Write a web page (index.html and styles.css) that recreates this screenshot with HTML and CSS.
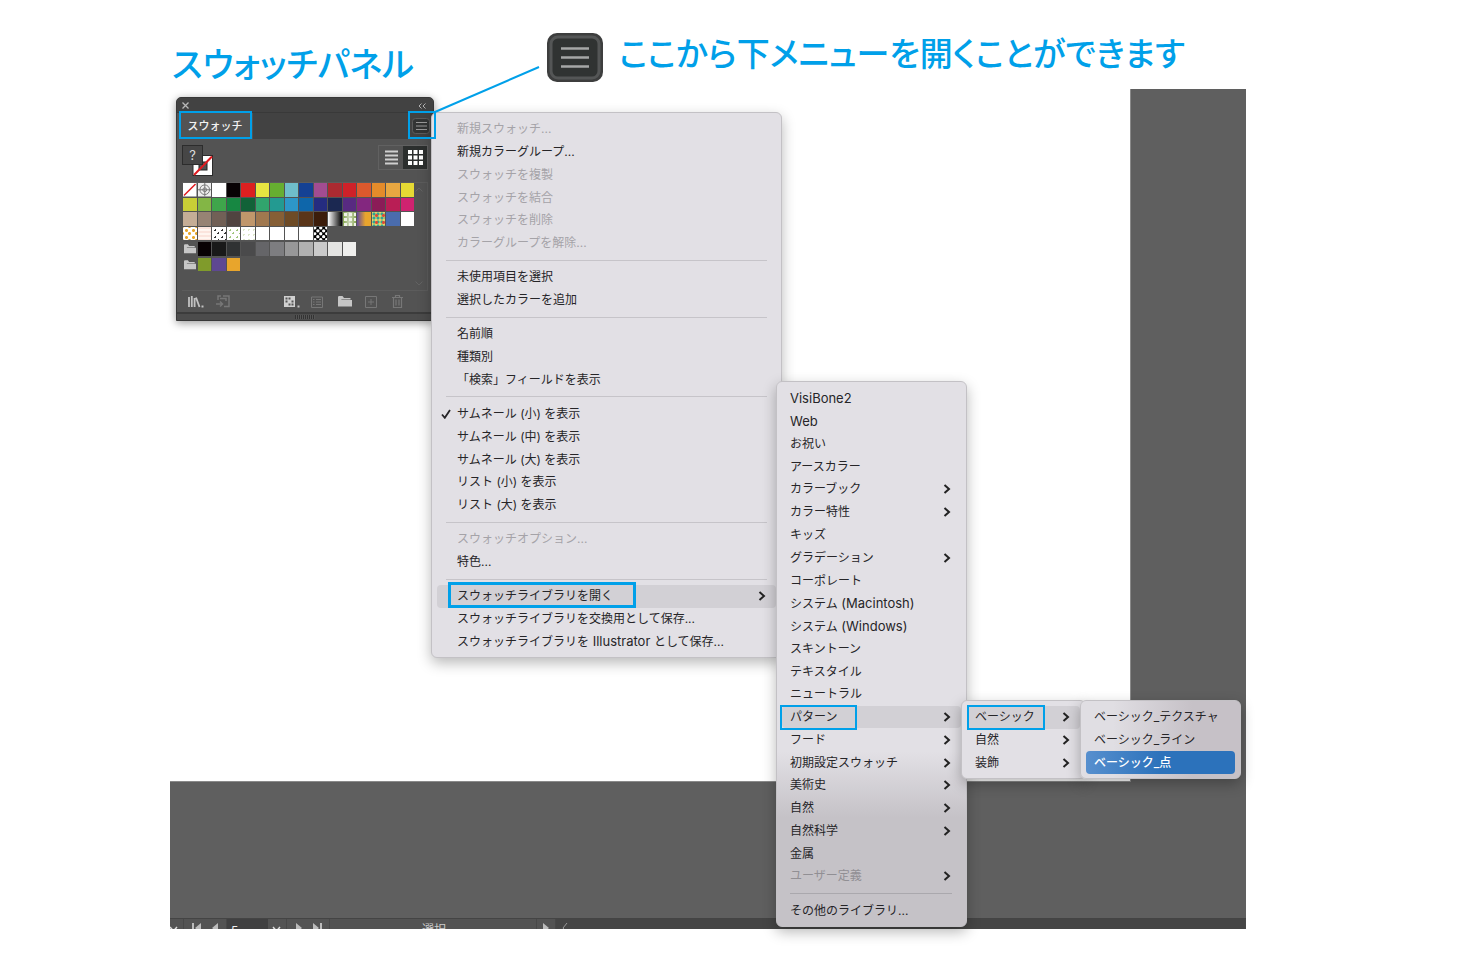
FILE: index.html
```html
<!DOCTYPE html>
<html lang="ja">
<head>
<meta charset="utf-8">
<title>スウォッチパネル</title>
<link rel="stylesheet" href="styles.css">
</head>
<body>
<svg class="defs" width="0" height="0" aria-hidden="true">
  <symbol id="chev" viewBox="0 0 8 12"><path d="M1.500 2 6 6 1.500 10" fill="none" stroke="currentColor" stroke-width="2"/></symbol>
  <symbol id="folder" viewBox="0 0 14 11"><path d="M0 10.500V1.200Q0 0 1.200 0H4.500L6 2H12.500V3.500H3.500L2 7V4H14V10.500Z" fill="currentColor"/></symbol>
</svg>

<header class="notes">
  <h1 class="note note-panel">スウォッチパネル</h1>
  <svg class="menu-icon" viewBox="0 0 56 49" aria-hidden="true">
    <rect width="56" height="49" rx="10" fill="#3d3e3e"/>
    <rect x="4" y="4" width="48" height="41" rx="7" fill="#303332" stroke="#545656" stroke-width="3"/>
    <path d="M14 15.500H42M14 24.500H42M14 33.500H42" stroke="#a5a7a6" stroke-width="2.400"/>
  </svg>
  <p class="note note-menu">ここから下メニューを開くことができます</p>
</header>

<main class="workspace">
  <div class="artboard"></div>
  <footer class="status">
    <div class="cell first"><svg width="9" height="7" viewBox="0 0 9 7"><path d="M0 1 3.500 5 7 1" fill="none" stroke="#ddd" stroke-width="1.500"/></svg></div>
    <div class="cell nav">
      <svg width="9" height="10" viewBox="0 0 9 10"><path d="M0 0H2V10H0ZM9 0V10L3 5Z" fill="#bbb"/></svg>
      <svg width="6" height="10" viewBox="0 0 6 10"><path d="M6 0V10L0 5Z" fill="#bbb"/></svg>
    </div>
    <input class="page-no" value="5" aria-label="アートボード">
    <div class="cell drop"><svg width="9" height="7" viewBox="0 0 9 7"><path d="M1 1 4.500 5 8 1" fill="none" stroke="#ddd" stroke-width="1.500"/></svg></div>
    <div class="cell nav">
      <svg width="6" height="10" viewBox="0 0 6 10"><path d="M0 0V10L6 5Z" fill="#bbb"/></svg>
      <svg width="9" height="10" viewBox="0 0 9 10"><path d="M9 0H7V10H9ZM0 0V10L6 5Z" fill="#bbb"/></svg>
    </div>
    <div class="cell tool">選択</div>
    <div class="cell play"><svg width="6" height="10" viewBox="0 0 6 10"><path d="M0 0V10L6 5Z" fill="#bbb"/></svg></div>
    <div class="cell track"><svg width="6" height="10" viewBox="0 0 6 10"><path d="M5 0 1 5 5 10" fill="none" stroke="#999"/></svg></div>
  </footer>

  <section class="panel">
    <div class="panel-top">
      <svg width="7" height="7" viewBox="0 0 7 7"><path d="M.5.5 6.500 6.500M6.500.5.5 6.500" stroke="#b8b8b8" stroke-width="1.300"/></svg>
      <svg width="8" height="6" viewBox="0 0 8 6"><path d="M3.500.5 1 3 3.500 5.500M7.500.5 5 3 7.500 5.500" fill="none" stroke="#b0b0b0"/></svg>
    </div>
    <div class="tabs">
      <button class="tab">スウォッチ</button>
      <button class="panel-menu" aria-label="パネルメニュー"><svg width="18" height="16" viewBox="0 0 18 16"><rect x=".5" y=".5" width="17" height="15" rx="3" fill="#333535" stroke="#5c5c5c"/><path d="M4 4.500H15M4 8H15M4 11.500H15" stroke="#999"/></svg></button>
    </div>
    <div class="tools">
      <svg width="32" height="32" viewBox="0 0 32 32" aria-hidden="true">
        <rect x="11" y="10.500" width="19.500" height="20" fill="#fff" stroke="#2c2c2c"/>
        <rect x="17" y="17" width="8" height="8" fill="#535353" stroke="#222"/>
        <path d="M12 30 30 11.500" stroke="#e01b20" stroke-width="2"/>
        <rect x=".5" y=".5" width="20" height="19" fill="#464646" stroke="#2c2c2c"/>
        <text x="10.500" y="15" class="q" text-anchor="middle">?</text>
      </svg>
      <div class="views">
        <button aria-label="リスト表示"><svg width="13" height="15" viewBox="0 0 13 15"><path d="M0 1.500H13M0 5.500H13M0 9.500H13M0 13.500H13" stroke="#cfcfcf" stroke-width="2"/></svg></button>
        <button class="on" aria-label="サムネール表示"><svg width="15" height="15" viewBox="0 0 15 15"><path d="M0 0H4V4H0ZM5.500 0H9.500V4H5.500ZM11 0H15V4H11ZM0 5.500H4V9.500H0ZM5.500 5.500H9.500V9.500H5.500ZM11 5.500H15V9.500H11ZM0 11H4V15H0ZM5.500 11H9.500V15H5.500ZM11 11H15V15H11Z" fill="#fff"/></svg></button>
      </div>
    </div>
    <div class="well">
      <div class="grid" id="main-swatches"></div>
      <div class="grid group" id="grays"><svg class="folder"><use href="#folder"/></svg></div>
      <div class="grid group" id="brights"><svg class="folder"><use href="#folder"/></svg></div>
      <div class="scroll">
        <svg width="8" height="5" viewBox="0 0 8 5"><path d="M.5 4.500 4 1 7.500 4.500" fill="none" stroke="#636363"/></svg>
        <svg width="8" height="5" viewBox="0 0 8 5"><path d="M.5.5 4 4 7.500.5" fill="none" stroke="#636363"/></svg>
      </div>
    </div>
    <div class="actions">
      <button aria-label="スウォッチライブラリメニュー"><svg width="16" height="12" viewBox="0 0 16 12"><path d="M1 1V11M3.800 0V11M6.600 2V11M8 1.500 11.500 11" fill="none" stroke="#c2c2c2" stroke-width="1.800"/><path d="M13.500 9.500H15.500V11.500H13.500Z" fill="#c2c2c2"/></svg></button>
      <button disabled aria-label="ライブラリに追加"><svg width="14" height="13" viewBox="0 0 14 13"><path d="M2 5V1H5M7 1H13V11.500H8M4 3.500H10V6M0 9H6M4 6.500 6.500 9 4 11.500" fill="none" stroke="#777" stroke-width="1.500"/></svg></button>
      <button aria-label="スウォッチの種類"><svg width="16" height="12" viewBox="0 0 16 12"><path d="M0 0H11V11H0Z" fill="#d0d0d0"/><path d="M1.500 2.500H3.500M4.500 2.500H6.500M1.500 5.500H3.500M7.500 5.500H9.500M4.500 8.500H6.500M7.500 8.500H9.500" stroke="#555" stroke-width="2"/><path d="M13.500 9.500H15.500V11.500H13.500Z" fill="#c2c2c2"/></svg></button>
      <button disabled aria-label="オプション"><svg width="12" height="12" viewBox="0 0 12 12"><path d="M.5 1H11.500V11.500H.5ZM2 3.500H3.500M5 3.500H10M2 6H3.500M5 6H10M2 8.500H3.500M5 8.500H10" fill="none" stroke="#777"/></svg></button>
      <button aria-label="新規カラーグループ"><svg width="14" height="11"><use href="#folder"/></svg></button>
      <button disabled aria-label="新規スウォッチ"><svg width="12" height="12" viewBox="0 0 12 12"><path d="M.5.5H11.500V11.500H.5ZM6 3V9M3 6H9" fill="none" stroke="#777"/></svg></button>
      <button disabled aria-label="削除"><svg width="11" height="13" viewBox="0 0 11 13"><path d="M0 2.500H11M3.500 2V.5H7.500V2M1.500 2.500V12.500H9.500V2.500M4 4.500V10.500M7 4.500V10.500" fill="none" stroke="#777" stroke-width="1.200"/></svg></button>
    </div>
    <div class="grip"></div>
  </section>

  <div class="menu menu-panel" role="menu">
    <button disabled>新規スウォッチ...</button>
    <button>新規カラーグループ...</button>
    <button disabled>スウォッチを複製</button>
    <button disabled>スウォッチを結合</button>
    <button disabled>スウォッチを削除</button>
    <button disabled>カラーグループを解除...</button>
    <hr>
    <button>未使用項目を選択</button>
    <button>選択したカラーを追加</button>
    <hr>
    <button>名前順</button>
    <button>種類別</button>
    <button>「検索」フィールドを表示</button>
    <hr>
    <button><svg class="check" viewBox="0 0 10 10"><path d="M1 5.500 3.800 8.800 9 1" fill="none" stroke="currentColor" stroke-width="1.800"/></svg>サムネール (小) を表示</button>
    <button>サムネール (中) を表示</button>
    <button>サムネール (大) を表示</button>
    <button>リスト (小) を表示</button>
    <button>リスト (大) を表示</button>
    <hr>
    <button disabled>スウォッチオプション...</button>
    <button>特色...</button>
    <hr>
    <button class="open">スウォッチライブラリを開く<svg class="chev"><use href="#chev"/></svg></button>
    <button>スウォッチライブラリを交換用として保存...</button>
    <button><span>スウォッチライブラリを<span class="latin"> Illustrator </span>として保存...</span></button>
  </div>

  <div class="menu menu-library" role="menu">
    <button><span class="latin">VisiBone2</span></button>
    <button><span class="latin">Web</span></button>
    <button>お祝い</button>
    <button>アースカラー</button>
    <button>カラーブック<svg class="chev"><use href="#chev"/></svg></button>
    <button>カラー特性<svg class="chev"><use href="#chev"/></svg></button>
    <button>キッズ</button>
    <button>グラデーション<svg class="chev"><use href="#chev"/></svg></button>
    <button>コーポレート</button>
    <button><span>システム<span class="latin"> (Macintosh)</span></span></button>
    <button><span>システム<span class="latin"> (Windows)</span></span></button>
    <button>スキントーン</button>
    <button>テキスタイル</button>
    <button>ニュートラル</button>
    <button class="open">パターン<svg class="chev"><use href="#chev"/></svg></button>
    <button>フード<svg class="chev"><use href="#chev"/></svg></button>
    <button>初期設定スウォッチ<svg class="chev"><use href="#chev"/></svg></button>
    <button>美術史<svg class="chev"><use href="#chev"/></svg></button>
    <button>自然<svg class="chev"><use href="#chev"/></svg></button>
    <button>自然科学<svg class="chev"><use href="#chev"/></svg></button>
    <button>金属</button>
    <button disabled>ユーザー定義<svg class="chev"><use href="#chev"/></svg></button>
    <hr>
    <button>その他のライブラリ...</button>
  </div>

  <div class="menu menu-pattern" role="menu">
    <button class="open">ベーシック<svg class="chev"><use href="#chev"/></svg></button>
    <button>自然<svg class="chev"><use href="#chev"/></svg></button>
    <button>装飾<svg class="chev"><use href="#chev"/></svg></button>
  </div>

  <div class="menu menu-basic" role="menu">
    <button>ベーシック_テクスチャ</button>
    <button>ベーシック_ライン</button>
    <button class="chosen">ベーシック_点</button>
  </div>

  <span class="mark mark-tab"></span>
  <span class="mark mark-button"></span>
  <span class="mark mark-open"></span>
  <span class="mark mark-pattern"></span>
  <span class="mark mark-basic"></span>
  <svg class="leader" viewBox="0 0 106 47"><path d="M1 46 105 1" stroke="#00a0e9" stroke-width="2"/></svg>
</main>
<script src="swatches.js"></script>
</body>
</html>
```
FILE: styles.css
```css
* { box-sizing: border-box; }
body {
  margin: 0;
  min-height: 100vh;
  background: #fff;
  font-family: Inter, "Noto Sans CJK JP", sans-serif;
  font-size: 12px;
  color: #262528;
}
button { border: 0; padding: 0; background: none; font: inherit; color: inherit; }
svg { display: block; flex: none; }
.defs { position: absolute; }
.latin { font-size: 13px; }

.notes { display: flex; height: 89px; padding-left: 172px; align-items: flex-start; }
.note {
  margin: 0;
  font-family: "Noto Sans CJK JP", sans-serif;
  font-weight: 500;
  font-feature-settings: "palt";
  line-height: 40px;
  color: #00a0e9;
  white-space: nowrap;
}
.note-panel { width: 375px; padding-top: 43px; font-size: 34px; }
.menu-icon { width: 56px; height: 49px; margin-top: 33px; }
.note-menu { padding: 32px 0 0 16px; font-size: 33px; }

.workspace {
  position: relative;
  display: grid;
  grid-template: 693px 136px 11px / 1fr 115px;
  margin: 0 214px 0 170px;
  background: #5f5f5f;
}
.artboard { background: #fff; border: solid #8a8a8a; border-width: 0 1px 1px 0; }

.status {
  grid-area: 3 / 1 / 4 / 3;
  display: flex;
  align-items: flex-start;
  overflow: hidden;
  background: #4b4b4b;
  border-top: 1px solid #444;
}
.cell { display: flex; height: 20px; padding-top: 4px; background: #535353; border-right: 1px solid #484848; }
.cell.first { width: 14px; padding-top: 7px; }
.cell.nav { width: 43px; gap: 11px; padding-left: 8px; }
.page-no { width: 41px; height: 20px; padding: 2px 4px 0; border: 0; background: #404041; font: inherit; color: #eee; }
.cell.drop { width: 19px; padding: 7px 0 0 4px; }
.cell.drop + .nav { padding-left: 9px; }
.cell.tool { width: 207px; justify-content: center; padding: 1px 0 0 2px; color: #ccc; }
.cell.play { width: 19px; padding-left: 6px; }
.cell.track { flex: 1; padding-left: 6px; background: #454545; }

.panel {
  position: absolute;
  left: 6px;
  top: 8px;
  width: 258px;
  display: flex;
  flex-direction: column;
  background: #535353;
  border: 1px solid #383838;
  border-radius: 5px 5px 0 0;
  box-shadow: 0 2px 8px rgba(0, 0, 0, .4);
}
.panel-top { display: flex; justify-content: space-between; align-items: center; height: 14px; padding: 1px 7px 0 5px; background: #424242; border-radius: 4px 4px 0 0; }
.tabs { display: flex; justify-content: space-between; height: 27px; background: #424242; border-top: 1px solid #393939; }
.tab { width: 76px; padding: 0 0 2px; background: #535353; color: #f2f2f2; font-weight: 500; font-size: 11px; }
.panel-menu { padding: 0 3px 1px 0; }
.tools { display: flex; justify-content: space-between; align-items: flex-start; height: 43px; padding: 6px 5px 0 5px; }
.q { font: 13px Inter, sans-serif; fill: #ddd; }
.views { display: flex; border: 1px solid #616161; }
.views button { display: flex; align-items: center; justify-content: center; width: 24px; height: 23px; }
.views .on { background: #2c2f2e; }
.well { position: relative; height: 109px; margin: 0 5px; padding: 0 13px 0 1px; border: 1px solid #5c5c5c; border-width: 1px 1px 1px 0; }
.grid { display: grid; grid-template-columns: repeat(16, 1fr); gap: 1px; }
.group { margin-top: 2px; }
.swatch { aspect-ratio: 1; }
.folder { width: 12px; height: 10px; margin: 2px 0 0 1px; color: #c6c6c6; }
.scroll { position: absolute; right: 4px; top: 4px; bottom: 4px; display: flex; flex-direction: column; justify-content: space-between; }
.dots-orange { background: radial-gradient(#e8a62b 1px, transparent 2px) 0 0 / 7px 7px, radial-gradient(#e8a62b 1px, #fff 2px) 3px 3px / 7px 7px; }
.lines-pink { background: repeating-linear-gradient(#fbe4dd 0 2px, #fff5f0 2px 4px); }
.dots-black { background: radial-gradient(#333 1px, transparent 1px) 0 0 / 7px 7px, radial-gradient(#333 1px, #fff 1px) 3px 3px / 7px 7px; }
.dots-green { background: radial-gradient(#9fc67c 1px, transparent 1px) 0 0 / 7px 7px, radial-gradient(#9fc67c 1px, #fff 1px) 3px 3px / 7px 7px; }
.dots-pale { background: radial-gradient(#dde8c9 1px, #fff 1px) 0 0 / 5px 5px; }
.leaves { background: radial-gradient(#eef2e6 2px, transparent 2px) 0 0 / 5px 5px, linear-gradient(90deg, #86a650, #ccd7bb, #86a650); }
.flowers { background: radial-gradient(#e14a34 1px, transparent 2px) 1px 0 / 7px 7px, radial-gradient(#2fa694 1px, #e5d36a 2px) 0 0 / 4px 4px; }
.actions { display: flex; align-items: center; height: 21px; padding-left: 11px; color: #c6c6c6; }
.actions button { display: flex; width: 27px; }
.actions button:nth-child(2) { width: 69px; padding-left: 1px; }
.grip {
  height: 8px;
  border-top: 2px solid #3c3c3c;
  background: repeating-linear-gradient(90deg, #333 0 1px, #555 1px 2px) center / 20px 4px no-repeat #4c4c4c;
}

.menu {
  position: absolute;
  display: flex;
  flex-direction: column;
  padding: 5px 5px 4px;
  border: 1px solid #c3c1c5;
  border-radius: 6px;
  background: #e2e0e5;
  box-shadow: 0 5px 14px rgba(0, 0, 0, .28);
}
.menu button {
  position: relative;
  flex: 2 1 0;
  min-height: 0;
  display: flex;
  align-items: center;
  justify-content: space-between;
  padding: 0 10px 0 8px;
  border-radius: 4px;
  text-align: left;
  line-height: 18px;
  white-space: pre;
}
.menu button:disabled { color: #a5a3a8; }
.menu hr { flex: 1 1 0; width: auto; margin: 0 9px 0 8px; border: 0; background: linear-gradient(#c6c4c9, #c6c4c9) center / 100% 1px no-repeat; }
.menu .open { background: #d2d0d5; }
.menu .chosen { background: linear-gradient(90deg, #578fce, #2c72bb 50%); color: #fff; font-weight: 500; }
.chev { width: 8px; height: 12px; color: #222; }
.menu-panel { left: 261px; top: 23px; width: 351px; height: 546px; }
.menu.menu-panel button { padding-left: 20px; }
.menu.menu-panel hr { margin-left: 9px; }
.menu .check { position: absolute; left: 4px; width: 10px; height: 10px; }
.menu-library { left: 606px; top: 292px; width: 191px; height: 546px; background: linear-gradient(#e2e0e5 68%, #c5c2c7 80%); }
.menu-library hr { background-image: linear-gradient(#aaa8ad, #aaa8ad); }
.menu-library button:disabled { color: #918f94; }
.menu-pattern { left: 791px; top: 611px; width: 125px; height: 79px; }
.menu-basic { left: 910px; top: 611px; width: 161px; height: 79px; background: linear-gradient(90deg, #e0dee3 20%, #c6c1c7 70%); }

.mark { position: absolute; border: 2px solid #00a0e9; }
.mark-tab { left: 9px; top: 22px; width: 73px; height: 28px; }
.mark-button { left: 238px; top: 22px; width: 28px; height: 28px; }
.mark-open { left: 278px; top: 493px; width: 188px; height: 26px; border-width: 3px; }
.mark-pattern { left: 610px; top: 616px; width: 77px; height: 25px; }
.mark-basic { left: 797px; top: 616px; width: 78px; height: 25px; }
.leader { position: absolute; left: 264px; top: -23px; width: 106px; height: 47px; }
```
FILE: swatches.js
```js
const palettes = {
  "main-swatches": [
    "none", "registration", "#ffffff", "#080204", "#dc2020", "#e7e541", "#66ae31", "#6fbecb",
    "#144194", "#a24c91", "#ab2a31", "#cf2129", "#dc592d", "#e48b2a", "#e8a741", "#e6da34",
    "#c8ce36", "#83b645", "#3fa54b", "#178742", "#126238", "#31a46d", "#239a91", "#2d97c9",
    "#0e66aa", "#252c80", "#1b2851", "#582a81", "#83277f", "#8b1c57", "#b91e55", "#cf2370",
    "#c5ad96", "#978374", "#716056", "#504440", "#c0976b", "#a0784f", "#865f36", "#6e4b26",
    "#5a3519", "#3c1d0b", "linear-gradient(90deg,#fff,#000)", "leaves",
    "linear-gradient(90deg,#624a9b,#e8a42d 60%)", "flowers", "#4a6cad", "#ffffff",
    "dots-orange", "lines-pink", "dots-black", "dots-green", "dots-pale", "#ffffff",
    "#ffffff", "#ffffff", "#ffffff", "checks"
  ],
  grays: ["#080204", "#191919", "#303233", "#4a4a4b", "#656568", "#7d7d80", "#979798", "#b0b0b0", "#cacaca", "#e4e4e2", "#f0f0ee"],
  brights: ["#809b2b", "#5e4892", "#e8a52c"]
};
const drawn = {
  none: '<svg viewBox="0 0 14 14"><path fill="#fff" d="M0 0H14V14H0Z"/><path d="M1 13 13 1" stroke="#e01b20" stroke-width="1.600"/></svg>',
  registration: '<svg viewBox="0 0 14 14"><path fill="#eee" d="M0 0H14V14H0Z"/><g fill="none" stroke="#777"><circle cx="7" cy="7" r="5"/><circle cx="7" cy="7" r="2"/><path d="M7 0V14M0 7H14"/></g></svg>',
  checks: '<svg viewBox="0 0 14 14"><path d="M0 0H14V14H0Z"/><g fill="#fff"><circle cx="7" cy="1" r="1.700"/><circle cx="1" cy="1" r="1.500"/><circle cx="13" cy="1" r="1.500"/><circle cx="4" cy="4" r="1.700"/><circle cx="10" cy="4" r="1.700"/><circle cx="1" cy="7" r="1.500"/><circle cx="7" cy="7" r="1.700"/><circle cx="13" cy="7" r="1.500"/><circle cx="4" cy="10" r="1.700"/><circle cx="10" cy="10" r="1.700"/><circle cx="1" cy="13" r="1.500"/><circle cx="7" cy="13" r="1.700"/><circle cx="13" cy="13" r="1.500"/></g></svg>'
};
for (const [id, colors] of Object.entries(palettes)) {
  const grid = document.getElementById(id);
  for (const color of colors) {
    const swatch = document.createElement("button");
    swatch.className = "swatch";
    if (drawn[color]) swatch.innerHTML = drawn[color];
    else if (/^(#|linear)/.test(color)) swatch.style.background = color;
    else swatch.classList.add(color);
    grid.append(swatch);
  }
}
```
